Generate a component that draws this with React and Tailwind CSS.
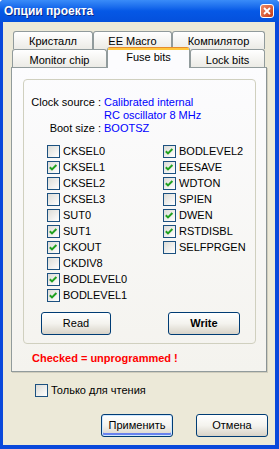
import React from "react";

const leftBits = [
  ["CKSEL0", false],
  ["CKSEL1", true],
  ["CKSEL2", false],
  ["CKSEL3", false],
  ["SUT0", false],
  ["SUT1", true],
  ["CKOUT", true],
  ["CKDIV8", false],
  ["BODLEVEL0", true],
  ["BODLEVEL1", true],
];

const rightBits = [
  ["BODLEVEL2", true],
  ["EESAVE", true],
  ["WDTON", true],
  ["SPIEN", false],
  ["DWEN", true],
  ["RSTDISBL", true],
  ["SELFPRGEN", false],
];

const Box = ({ checked }) => (
  <span className="w-[13px] h-[13px] shrink-0 border border-[#1c5180] bg-linear-to-br from-[#dcdcd7] to-white flex items-center justify-center">
    {checked && (
      <svg width="11" height="11" viewBox="0 0 11 11">
        <path d="M1.8 5.2 L4 7.4 L8.4 3" stroke="#21a121" strokeWidth="2" fill="none" />
      </svg>
    )}
  </span>
);

const Bit = ({ name, checked }) => (
  <div className="h-[16px] flex items-center gap-[3px]">
    <Box checked={checked} />
    <span>{name}</span>
  </div>
);

const XpButton = ({ children, className = "" }) => (
  <button
    className={
      "h-[23px] border border-[#003c74] rounded-[3px] bg-linear-to-b from-white via-[#f4f3ee] to-[#d8d3c8] text-[11px] text-black " +
      className
    }
  >
    {children}
  </button>
);

const Tab = ({ children, className = "" }) => (
  <div
    className={
      "h-[18px] border border-b-0 border-[#919b9c] rounded-t-[3px] bg-linear-to-b from-white to-[#ecebe6] text-center leading-[13px] pt-[3px] " +
      className
    }
  >
    {children}
  </div>
);

export default function App() {
  return (
    <div className="w-[279px] h-[449px] flex flex-col bg-[#0a48db] rounded-t-[4px] overflow-hidden font-['Liberation_Sans',Arial,sans-serif] text-[11px] text-black">
      {/* title bar */}
      <div className="h-[22px] shrink-0 flex items-center justify-between pl-[4px] pr-[5px] bg-linear-to-b from-[#3a8cf8] via-[#0558e6] to-[#0450dc]">
        <span className="text-white font-bold text-[12px] [text-shadow:1px_1px_0_#0a2a8a]">
          Опции проекта
        </span>
        <div className="w-[14px] h-[14px] rounded-[3px] border border-white bg-linear-to-br from-[#ee8a66] to-[#c5360e] flex items-center justify-center">
          <svg width="8" height="8" viewBox="0 0 8 8">
            <path d="M1 1 L7 7 M7 1 L1 7" stroke="white" strokeWidth="1.8" />
          </svg>
        </div>
      </div>

      {/* client */}
      <div className="flex-1 ml-[3px] mr-[4px] mb-[4px] bg-[#ece9d8] flex flex-col">
        <div className="ml-[8px] mt-[9px] w-[256px]">
          <div className="flex ml-[2px]">
            <Tab className="w-[80px]">Кристалл</Tab>
            <Tab className="w-[79px]">EE Macro</Tab>
            <Tab className="w-[93px]">Компилятор</Tab>
          </div>
          <div className="flex items-end h-[18px] ml-[1px]">
            <Tab className="w-[95px] pt-[4px]">Monitor chip</Tab>
            <div className="relative z-10 -mb-px w-[83px] h-[21px] shrink-0 border-x border-[#919b9c] rounded-t-[3px] bg-[#fcfcfe] overflow-hidden">
              <div className="h-px bg-[#e68b2c]" />
              <div className="h-[2px] bg-[#ffc73c]" />
              <div className="text-center leading-[13px] pt-[1px]">Fuse bits</div>
            </div>
            <Tab className="w-[75px] pt-[4px]">Lock bits</Tab>
          </div>

          {/* panel */}
          <div className="h-[305px] border border-[#919b9c] border-r-[#8a9394] bg-linear-to-b from-[#fcfcfe] to-[#f4f3ee] shadow-[1px_1px_0_#d0cdbd]">
            <div className="ml-[11px] mt-[11px] w-[233px] border border-[#d0d0bf] rounded-[4px] pt-[16px] pb-[8px]">
              <div className="grid grid-cols-[77px_1fr] gap-x-[3px] leading-[13px]">
                <span className="text-right">Clock source :</span>
                <span className="text-[#0000ff]">
                  Calibrated internal
                  <br />
                  RC oscillator 8 MHz
                </span>
                <span className="text-right">Boot size :</span>
                <span className="text-[#0000ff]">BOOTSZ</span>
              </div>

              <div className="flex mt-[8px] pl-[23px]">
                <div className="w-[116px]">
                  {leftBits.map(([n, c]) => (
                    <Bit key={n} name={n} checked={c} />
                  ))}
                </div>
                <div>
                  {rightBits.map(([n, c]) => (
                    <Bit key={n} name={n} checked={c} />
                  ))}
                </div>
              </div>

              <div className="flex mt-[9px] ml-[17px] gap-[57px]">
                <XpButton className="w-[70px]">Read</XpButton>
                <XpButton className="w-[72px] font-bold">Write</XpButton>
              </div>
            </div>
            <div className="mt-[8px] pl-[20px] leading-[13px] font-bold text-[#ff0000]">
              Checked = unprogrammed !
            </div>
          </div>
        </div>

        <div className="mt-[10px] ml-[32px]">
          <Bit name="Только для чтения" checked={false} />
        </div>

        <div className="mt-[16px] flex justify-end gap-[23px] pr-[7px]">
          <XpButton className="w-[72px] shadow-[inset_0_0_0_1px_#cee7ff,inset_0_-2px_0_1px_#6982ee]">
            Применить
          </XpButton>
          <XpButton className="w-[72px]">Отмена</XpButton>
        </div>
      </div>
    </div>
  );
}
